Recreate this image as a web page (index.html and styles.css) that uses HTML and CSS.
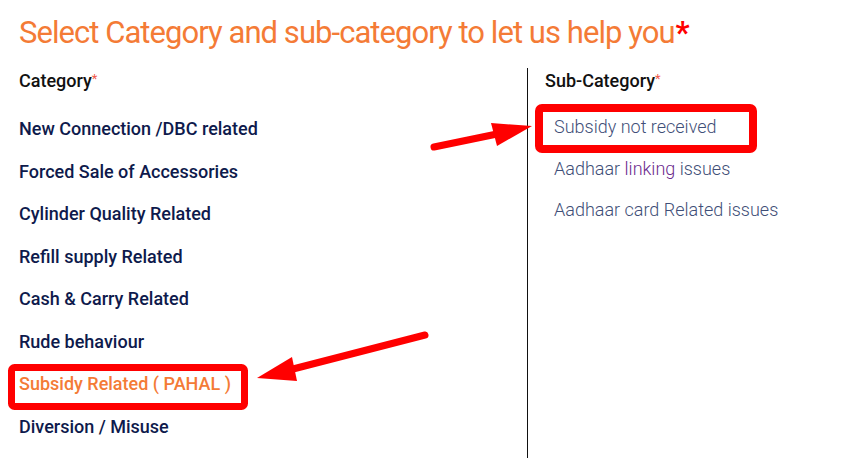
FILE: index.html
```html
<!DOCTYPE html>
<html lang="en">
<head>
<meta charset="utf-8">
<title>Select Category</title>
<link rel="stylesheet" href="styles.css">
</head>
<body>
<div class="page">
  <h1 class="title">Select Category and sub-category to let us help you<span class="req-big">*</span></h1>
  <div class="columns">
    <div class="col col-left">
      <div class="label">Category<span class="req">*</span></div>
      <ul class="cat-list">
        <li>New Connection /DBC related</li>
        <li>Forced Sale of Accessories</li>
        <li>Cylinder Quality Related</li>
        <li>Refill supply Related</li>
        <li>Cash &amp; Carry Related</li>
        <li>Rude behaviour</li>
        <li class="active">Subsidy Related ( PAHAL )</li>
        <li>Diversion / Misuse</li>
      </ul>
    </div>
    <div class="col col-right">
      <div class="label">Sub-Category<span class="req">*</span></div>
      <ul class="sub-list">
        <li>Subsidy not received</li>
        <li>Aadhaar <span class="visited">linking</span> issues</li>
        <li>Aadhaar card Related issues</li>
      </ul>
    </div>
  </div>
  <svg class="annot" width="863" height="458" viewBox="0 0 863 458" aria-hidden="true">
    <rect x="11.5" y="367.5" width="233" height="39" rx="3" fill="none" stroke="#ff0000" stroke-width="7"/>
    <rect x="539" y="108" width="214" height="41" rx="3" fill="none" stroke="#ff0000" stroke-width="8"/>
    <line x1="434" y1="147" x2="497" y2="134" stroke="#ff0000" stroke-width="7" stroke-linecap="round"/>
    <polygon points="491,123 532,126 497,146" fill="#ff0000"/>
    <line x1="425" y1="335" x2="293" y2="369" stroke="#ff0000" stroke-width="7" stroke-linecap="round"/>
    <polygon points="292,357 257,378 297,381" fill="#ff0000"/>
  </svg>
</div>
</body>
</html>
```
FILE: styles.css
```css
* { box-sizing: border-box; }
html, body { margin: 0; padding: 0; background: #fff; }
body { font-family: Roboto, "Liberation Sans", sans-serif; }
.page { position: relative; width: 863px; height: 458px; overflow: hidden; }
.title {
  margin: 0;
  padding: 14px 0 0 19px;
  font-size: 31px;
  line-height: 38px;
  font-weight: 400;
  color: #f47b36;
  letter-spacing: -0.95px;
}
.req-big { color: #ff0000; font-weight: 700; margin-left: 1px; }
.columns { display: flex; margin-top: 16px; height: 390px; }
.col-left { width: 527px; padding: 1px 0 0 19px; }
.col-right { flex: 1; border-left: 1px solid #111; padding: 1px 0 0 17px; }
.label { font-size: 18px; line-height: 20px; font-weight: 500; color: #111; }
.req { color: #f0584a; font-weight: 400; font-size: 13px; vertical-align: 4px; }
ul { list-style: none; margin: 0; padding: 0; }
.cat-list { margin-top: 28px; display: flex; flex-direction: column; gap: 22.5px; }
.cat-list li { font-size: 18px; line-height: 20px; font-weight: 500; color: #0e1a4c; }
.cat-list li.active { color: #f47b36; }
.sub-list { margin-top: 26px; padding-left: 9px; display: flex; flex-direction: column; gap: 21.5px; }
.sub-list li { font-size: 18px; line-height: 20px; font-weight: 300; color: #3f4f78; }
.visited { color: #6b2a8e; }
.annot { position: absolute; left: 0; top: 0; pointer-events: none; }
```
